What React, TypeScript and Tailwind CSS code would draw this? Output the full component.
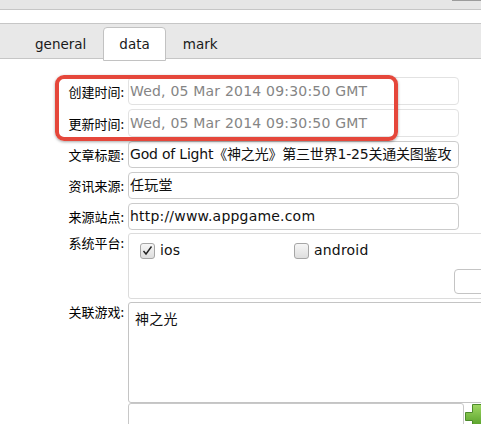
export default function App() {
  const label =
    "w-[128px] shrink-0 pr-[4px] text-right text-[13px] leading-[19px] text-[#000] font-['Noto_Sans_CJK_SC',sans-serif]";
  const field =
    "font-['DejaVu_Sans','Noto_Sans_CJK_SC',sans-serif] text-[14px] tracking-[0.2px]";
  const fieldTight =
    "font-['DejaVu_Sans','Noto_Sans_CJK_SC',sans-serif] text-[14px] tracking-[-0.2px]";
  return (
    <div className="relative w-[481px] h-[424px] overflow-hidden bg-white">
      {/* top strip */}
      <div className="h-[9px] bg-[#e6e6e6] flex justify-end">
        <div className="w-[29px] h-px bg-[#9c9c9c]" />
      </div>
      <div className="h-[14px] border-t border-[#c6c6c6] bg-white" />
      {/* tab bar */}
      <div className="h-[36px] border-y border-[#c6c6c6] bg-[#e8e8e8] flex items-end pl-[20px] gap-[2px] font-['DejaVu_Sans',sans-serif] text-[13.5px] text-[#1a1a1a]">
        <div className="h-[34px] -mb-[3px] px-[15px] flex items-center">general</div>
        <div className="h-[34px] -mb-[3px] px-[15px] flex items-center bg-white border border-[#c2c2c2] rounded-t-[4px]">
          data
        </div>
        <div className="h-[34px] -mb-[3px] px-[15px] flex items-center">mark</div>
      </div>

      {/* form */}
      <div className="flex flex-col pt-[18px]">
        <div className="flex items-center h-[28px]">
          <div className={label}>创建时间:</div>
          <div className={`w-[331px] h-full shrink-0 border border-[#e2e2e2] rounded-[4px] px-[1px] flex items-center text-[#858585] whitespace-nowrap overflow-hidden ${field}`}>
            Wed, 05 Mar 2014 09:30:50 GMT
          </div>
        </div>
        <div className="flex items-center h-[28px] mt-[4px]">
          <div className={label}>更新时间:</div>
          <div className={`w-[331px] h-full shrink-0 border border-[#e2e2e2] rounded-[4px] px-[1px] flex items-center text-[#858585] whitespace-nowrap overflow-hidden ${field}`}>
            Wed, 05 Mar 2014 09:30:50 GMT
          </div>
        </div>
        <div className="flex items-center h-[27px] mt-[4px]">
          <div className={label}>文章标题:</div>
          <div className={`w-[331px] h-full shrink-0 border border-[#cbcbcb] rounded-[4px] px-[1px] flex items-center text-[#111] whitespace-nowrap overflow-hidden ${fieldTight}`}>
            God of Light《神之光》第三世界1-25关通关图鉴攻
          </div>
        </div>
        <div className="flex items-center h-[27px] mt-[4px]">
          <div className={label}>资讯来源:</div>
          <div className={`w-[331px] h-full shrink-0 border border-[#cbcbcb] rounded-[4px] px-[1px] flex items-center text-[#111] whitespace-nowrap overflow-hidden ${field}`}>
            任玩堂
          </div>
        </div>
        <div className="flex items-center h-[27px] mt-[4px]">
          <div className={label}>来源站点:</div>
          <div className={`w-[331px] h-full shrink-0 border border-[#cbcbcb] rounded-[4px] px-[1px] flex items-center text-[#111] whitespace-nowrap overflow-hidden ${field}`}>
            http://www.appgame.com
          </div>
        </div>

        {/* platform */}
        <div className="flex items-start mt-[3px]">
          <div className={label}>系统平台:</div>
          <div className="w-[400px] h-[66px] shrink-0 border border-[#dcdcdc] rounded-[3px] pl-[11px] pt-[8px] flex flex-col">
            <div className={`flex items-center h-[17px] text-[#111] ${field}`}>
              <div className="w-[154px] flex items-center gap-[5px]">
                <div className="w-[15px] h-[16px] rounded-[3px] border border-[#a6a6a6] bg-gradient-to-b from-[#f6f6f6] to-[#dedede] flex items-center justify-center">
                  <svg width="11" height="11" viewBox="0 0 11 11">
                    <path d="M1.5 6 L4 9 L9.5 1.5" fill="none" stroke="#222" strokeWidth="1.4" />
                  </svg>
                </div>
                <span>ios</span>
              </div>
              <div className="flex items-center gap-[5px]">
                <div className="w-[15px] h-[16px] rounded-[3px] border border-[#a6a6a6] bg-gradient-to-b from-[#f6f6f6] to-[#dedede]" />
                <span>android</span>
              </div>
            </div>
            <div className="mt-[10px] ml-[314px] w-[60px] h-[25px] border border-[#c4c4c4] rounded-[4px] bg-white" />
          </div>
        </div>

        {/* related games */}
        <div className="flex items-start mt-[3px]">
          <div className={label}>关联游戏:</div>
          <div className={`w-[400px] h-[101px] shrink-0 border border-[#c4c4c4] rounded-[3px] px-[6px] pt-[6px] leading-[20px] text-[#111] ${field}`}>
            神之光
          </div>
        </div>
        <div className="flex items-start">
          <div className="w-[128px] shrink-0" />
          <div className="w-[336px] h-[30px] shrink-0 border border-[#c8c8c8] rounded-[3px]" />
          <div className="h-[30px] shrink-0 pl-[1px] pt-[1px]">
            <svg width="26" height="26" viewBox="0 0 26 26">
              <defs>
                <linearGradient id="pg" x1="0" y1="0" x2="0" y2="1">
                  <stop offset="0" stopColor="#9fd864" />
                  <stop offset="1" stopColor="#4f9a22" />
                </linearGradient>
              </defs>
              <path
                d="M7.5 0.5 H16.5 V8.5 H24.5 V16.5 H16.5 V24.5 H7.5 V16.5 H0.5 V8.5 H7.5 Z"
                fill="url(#pg)"
                stroke="#4c8a2a"
                strokeWidth="1"
              />
            </svg>
          </div>
        </div>
      </div>

      {/* red annotation */}
      <div className="absolute left-[55px] top-[75px] w-[343px] h-[66px] border-[4px] border-[#e5473b] rounded-[9px] shadow-[0_1px_3px_rgba(0,0,0,0.35)]" />
    </div>
  );
}
